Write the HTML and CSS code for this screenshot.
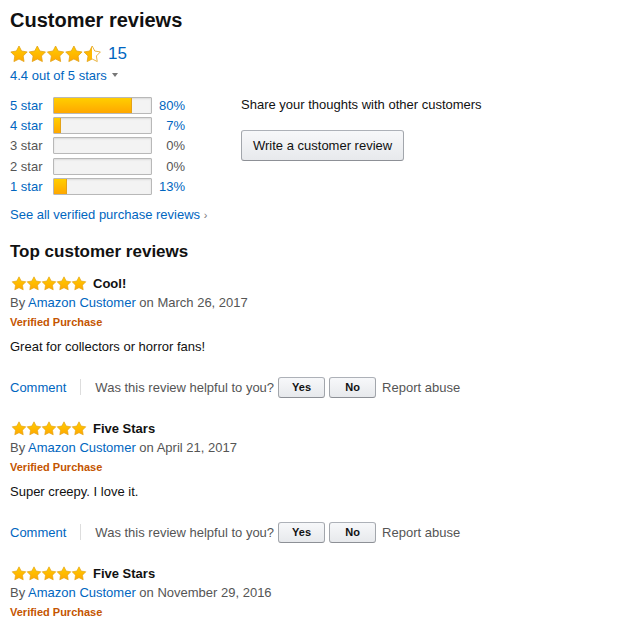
FILE: index.html
```html
<!DOCTYPE html>
<html lang="en">

<head>
    <meta charset="UTF-8">
    <title>Customer reviews</title>
    <link rel="stylesheet" href="styles.css">
</head>

<body>
    <h2 class="title">Customer reviews</h2>

    <div class="summary">
        <span class="stars big">
            <svg width="92" height="18" viewBox="0 0 92 18">
                <defs>
                    <linearGradient id="g1" x1="0" y1="0" x2="0" y2="1">
                        <stop offset="0" stop-color="#ffce00" />
                        <stop offset="1" stop-color="#ffa700" />
                    </linearGradient>
                    <linearGradient id="gh" x1="0" y1="0" x2="1" y2="0">
                        <stop offset="0.5" stop-color="#ffb900" />
                        <stop offset="0.5" stop-color="#fff" />
                    </linearGradient>
                    <path id="st" d="M9 1L11.59 6.04L17.18 6.94L13.18 10.96L14.06 16.56L9 14L3.94 16.56L4.82 10.96L0.82 6.94L6.41 6.04Z" />
                </defs>
                <use href="#st" x="0" fill="url(#g1)" stroke="#e3a217" stroke-width="0.8" />
                <use href="#st" x="18.3" fill="url(#g1)" stroke="#e3a217" stroke-width="0.8" />
                <use href="#st" x="36.6" fill="url(#g1)" stroke="#e3a217" stroke-width="0.8" />
                <use href="#st" x="54.9" fill="url(#g1)" stroke="#e3a217" stroke-width="0.8" />
                <use href="#st" x="73.2" fill="url(#gh)" stroke="#e3a217" stroke-width="0.8" />
            </svg>
        </span>
        <a class="count" href="#">15</a>
    </div>
    <a class="outof" href="#">4.4 out of 5 stars <span class="caret"></span></a>

    <div class="overview">
        <table class="histogram">
            <tr>
                <td class="label link">5 star</td>
                <td><div class="bar"><div class="fill" style="width: 80%"></div></div></td>
                <td class="pct link">80%</td>
            </tr>
            <tr>
                <td class="label link">4 star</td>
                <td><div class="bar"><div class="fill" style="width: 7%"></div></div></td>
                <td class="pct link">7%</td>
            </tr>
            <tr>
                <td class="label">3 star</td>
                <td><div class="bar"></div></td>
                <td class="pct">0%</td>
            </tr>
            <tr>
                <td class="label">2 star</td>
                <td><div class="bar"></div></td>
                <td class="pct">0%</td>
            </tr>
            <tr>
                <td class="label link">1 star</td>
                <td><div class="bar"><div class="fill" style="width: 13%"></div></div></td>
                <td class="pct link">13%</td>
            </tr>
        </table>

        <div class="write">
            <p>Share your thoughts with other customers</p>
            <button class="btn big-btn">Write a customer review</button>
        </div>
    </div>

    <a class="see-all" href="#">See all verified purchase reviews <span class="chev">&rsaquo;</span></a>

    <h3 class="subtitle">Top customer reviews</h3>

    <div class="review">
        <div class="head">
            <svg class="small-stars" width="78" height="15" viewBox="0 0 90 18">
                <use href="#st" x="0" fill="url(#g1)" stroke="#e3a217" stroke-width="0.8" />
                <use href="#st" x="18" fill="url(#g1)" stroke="#e3a217" stroke-width="0.8" />
                <use href="#st" x="36" fill="url(#g1)" stroke="#e3a217" stroke-width="0.8" />
                <use href="#st" x="54" fill="url(#g1)" stroke="#e3a217" stroke-width="0.8" />
                <use href="#st" x="72" fill="url(#g1)" stroke="#e3a217" stroke-width="0.8" />
            </svg>
            <b>Cool!</b>
        </div>
        <div class="byline">By <a href="#">Amazon Customer</a> on March 26, 2017</div>
        <div class="verified">Verified Purchase</div>
        <p class="body">Great for collectors or horror fans!</p>
        <div class="actions">
            <a href="#">Comment</a>
            <span class="sep"></span>
            <span>Was this review helpful to you?</span>
            <button class="btn small-btn">Yes</button>
            <button class="btn small-btn">No</button>
            <span class="report">Report abuse</span>
        </div>
    </div>

    <div class="review">
        <div class="head">
            <svg class="small-stars" width="78" height="15" viewBox="0 0 90 18">
                <use href="#st" x="0" fill="url(#g1)" stroke="#e3a217" stroke-width="0.8" />
                <use href="#st" x="18" fill="url(#g1)" stroke="#e3a217" stroke-width="0.8" />
                <use href="#st" x="36" fill="url(#g1)" stroke="#e3a217" stroke-width="0.8" />
                <use href="#st" x="54" fill="url(#g1)" stroke="#e3a217" stroke-width="0.8" />
                <use href="#st" x="72" fill="url(#g1)" stroke="#e3a217" stroke-width="0.8" />
            </svg>
            <b>Five Stars</b>
        </div>
        <div class="byline">By <a href="#">Amazon Customer</a> on April 21, 2017</div>
        <div class="verified">Verified Purchase</div>
        <p class="body">Super creepy. I love it.</p>
        <div class="actions">
            <a href="#">Comment</a>
            <span class="sep"></span>
            <span>Was this review helpful to you?</span>
            <button class="btn small-btn">Yes</button>
            <button class="btn small-btn">No</button>
            <span class="report">Report abuse</span>
        </div>
    </div>

    <div class="review">
        <div class="head">
            <svg class="small-stars" width="78" height="15" viewBox="0 0 90 18">
                <use href="#st" x="0" fill="url(#g1)" stroke="#e3a217" stroke-width="0.8" />
                <use href="#st" x="18" fill="url(#g1)" stroke="#e3a217" stroke-width="0.8" />
                <use href="#st" x="36" fill="url(#g1)" stroke="#e3a217" stroke-width="0.8" />
                <use href="#st" x="54" fill="url(#g1)" stroke="#e3a217" stroke-width="0.8" />
                <use href="#st" x="72" fill="url(#g1)" stroke="#e3a217" stroke-width="0.8" />
            </svg>
            <b>Five Stars</b>
        </div>
        <div class="byline">By <a href="#">Amazon Customer</a> on November 29, 2016</div>
        <div class="verified">Verified Purchase</div>
    </div>
</body>

</html>
```

FILE: styles.css
```css
body {
    font-family: 'Liberation Sans', Arial, sans-serif;
    font-size: 13px;
    color: #111;
    background: #fff;
    margin: 0;
    padding: 6px 10px;
}

a {
    color: #0066c0;
    text-decoration: none;
}

.title {
    font-size: 20px;
    font-weight: bold;
    margin: 0;
    line-height: 28px;
}

.summary {
    display: flex;
    align-items: center;
    gap: 6px;
    margin-top: 10px;
    height: 20px;
}

.stars svg {
    display: block;
}

.count {
    font-size: 17px;
}

.outof {
    display: inline-block;
    margin-top: 3px;
    line-height: 18px;
}

.caret {
    display: inline-block;
    width: 0;
    height: 0;
    border-left: 3.5px solid transparent;
    border-right: 3.5px solid transparent;
    border-top: 4px solid #777;
    vertical-align: middle;
    margin-left: 2px;
    margin-top: -4px;
}

.overview {
    display: flex;
    gap: 56px;
    margin-top: 10px;
}

.histogram {
    border-collapse: collapse;
}

.histogram td {
    padding: 0;
    height: 20.3px;
}

.histogram .label {
    width: 43px;
    color: #555;
}

.histogram .link {
    color: #0066c0;
}

.histogram .pct {
    text-align: right;
    width: 33px;
    color: #555;
}

.histogram .pct.link {
    color: #0066c0;
}

.bar {
    width: 97px;
    height: 15px;
    background: #f3f3f3;
    border: 1px solid #b8b8b8;
    border-radius: 1px;
    box-shadow: inset 0 1px 2px rgba(0, 0, 0, 0.1);
    overflow: hidden;
}

.fill {
    height: 100%;
    background: linear-gradient(#ffce00, #ffa700);
    border-right: 1px solid #e3a217;
    box-sizing: border-box;
}

.write p {
    margin: 0;
    line-height: 20px;
}

.btn {
    font-family: inherit;
    color: #111;
    background: linear-gradient(#f7f8fa, #e7e9ec);
    border: 1px solid #adb1b8;
    border-color: #adb1b8 #a2a6ac #8d9096;
    border-radius: 3px;
    cursor: pointer;
}

.big-btn {
    margin-top: 15px;
    font-size: 13px;
    height: 31px;
    padding: 0 11px;
}

.see-all {
    display: inline-block;
    margin-top: 10px;
    line-height: 18px;
}

.chev {
    color: #777;
    font-size: 11px;
}

.subtitle {
    font-size: 17px;
    font-weight: bold;
    margin: 16px 0 0;
    line-height: 24px;
}

.review {
    margin-top: 10px;
    height: 135px;
}

.head {
    display: flex;
    align-items: center;
    gap: 5px;
    height: 19px;
}

.head b {
    font-size: 13px;
}

.byline {
    color: #555;
    line-height: 20px;
}

.verified {
    color: #c45500;
    font-size: 11px;
    font-weight: bold;
    line-height: 19px;
}

.body {
    margin: 5px 0 0;
    line-height: 20px;
}

.actions {
    display: flex;
    align-items: center;
    margin-top: 18px;
    color: #555;
    height: 24px;
}

.sep {
    width: 1px;
    height: 16px;
    background: #ddd;
    margin: 0 14px;
}

.small-btn {
    font-size: 11px;
    font-weight: bold;
    width: 47px;
    height: 21px;
    margin-left: 4px;
    padding: 0;
}

.report {
    margin-left: 6px;
}
```
